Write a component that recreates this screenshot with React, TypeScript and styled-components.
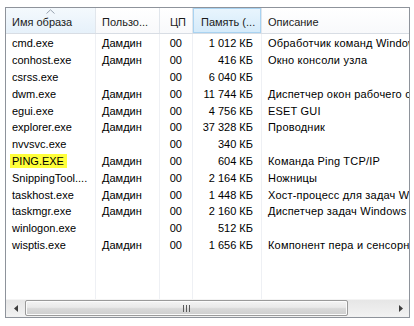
import React from "react";
import styled, { createGlobalStyle } from "styled-components";

const Global = createGlobalStyle`
  html, body { margin: 0; padding: 0; background: #fff; }
  body { font-family: "Liberation Sans", Arial, sans-serif; font-size: 11px; color: #000; }
`;

const COLS = "90px 64px 33px 69px 1fr";

const Page = styled.div`
  width: 414px;
  height: 326px;
  padding: 7px 4px 0 5px;
  box-sizing: border-box;
`;

const Panel = styled.div`
  width: 405px;
  height: 311px;
  box-sizing: border-box;
  border: 1px solid #8e939b;
  display: flex;
  flex-direction: column;
  overflow: hidden;
  background: #fff;
`;

const Header = styled.div`
  display: grid;
  grid-template-columns: ${COLS};
  height: 25px;
  border-bottom: 1px solid #d8dde4;
  background: linear-gradient(#ffffff, #f8f9fb);
  flex: none;
`;

const HeadCell = styled.div<{ $align?: "left" | "right"; $tone?: "sorted" | "hot" }>`
  position: relative;
  display: flex;
  align-items: center;
  justify-content: ${(p) => (p.$align === "right" ? "flex-end" : "flex-start")};
  padding: 3px 6px 0 6px;
  box-sizing: border-box;
  white-space: nowrap;
  overflow: hidden;
  color: #1a1a1a;
  border-right: 1px solid #e1e6ec;
  background: ${(p) =>
    p.$tone === "sorted"
      ? "linear-gradient(#f4f9fd, #e6f1fa)"
      : p.$tone === "hot"
      ? "linear-gradient(#e9f5fd, #d4eafa)"
      : "transparent"};
  ${(p) => (p.$tone === "hot" ? "box-shadow: inset 0 0 0 1px #a9d3f1;" : "")}
  &:last-child { border-right: none; }
`;

const SortArrow = styled.svg`
  position: absolute;
  left: 40px;
  top: 1px;
`;

const Body = styled.div`
  flex: 1;
  padding-top: 1px;
  background:
    linear-gradient(#eef0f4, #eef0f4) 89px 0 / 1px 100% no-repeat,
    linear-gradient(#eef0f4, #eef0f4) 153px 0 / 1px 100% no-repeat,
    linear-gradient(#eef0f4, #eef0f4) 186px 0 / 1px 100% no-repeat,
    linear-gradient(#eef0f4, #eef0f4) 255px 0 / 1px 100% no-repeat,
    #fff;
`;

const Row = styled.div`
  display: grid;
  grid-template-columns: ${COLS};
  height: 16.8px;
  align-items: center;
`;

const Cell = styled.div<{ $align?: "left" | "right"; $pr?: number }>`
  padding: 0 ${(p) => p.$pr ?? 6}px 0 6px;
  text-align: ${(p) => p.$align ?? "left"};
  white-space: nowrap;
  overflow: hidden;
  line-height: 14px;
`;

const WideCell = styled(Cell)`
  letter-spacing: 0.2px;
`;

const Marked = styled.span`
  background: #ffff3a;
  padding: 2px 3px 2px 2px;
  margin-left: -2px;
`;

const ScrollBar = styled.div`
  flex: none;
  height: 17px;
  display: grid;
  grid-template-columns: 19px 1fr 17px;
  background: linear-gradient(#e6e6e6, #f2f2f2);
  border-top: 1px solid #f4f4f4;
`;

const ArrowBtn = styled.div`
  display: flex;
  align-items: center;
  justify-content: center;
`;

const Track = styled.div`
  display: flex;
`;

const Thumb = styled.div`
  width: 323px;
  height: 16px;
  box-sizing: border-box;
  border: 1px solid #9a9a9a;
  border-radius: 2px;
  background: linear-gradient(#f4f4f4, #e9e9e9 45%, #d8d8d8 55%, #cfcfcf);
  box-shadow: inset 0 0 0 1px #fbfbfb;
  display: flex;
  align-items: center;
  justify-content: center;
`;

type Proc = { name: string; user: string; cpu: string; mem: string; desc: string; mark?: boolean };

const data: Proc[] = [
  { name: "cmd.exe", user: "Дамдин", cpu: "00", mem: "1 012 КБ", desc: "Обработчик команд Windows" },
  { name: "conhost.exe", user: "Дамдин", cpu: "00", mem: "416 КБ", desc: "Окно консоли узла" },
  { name: "csrss.exe", user: "", cpu: "00", mem: "6 040 КБ", desc: "" },
  { name: "dwm.exe", user: "Дамдин", cpu: "00", mem: "11 744 КБ", desc: "Диспетчер окон рабочего стола" },
  { name: "egui.exe", user: "Дамдин", cpu: "00", mem: "4 756 КБ", desc: "ESET GUI" },
  { name: "explorer.exe", user: "Дамдин", cpu: "00", mem: "37 328 КБ", desc: "Проводник" },
  { name: "nvvsvc.exe", user: "", cpu: "00", mem: "340 КБ", desc: "" },
  { name: "PING.EXE", user: "Дамдин", cpu: "00", mem: "604 КБ", desc: "Команда Ping TCP/IP", mark: true },
  { name: "SnippingTool....", user: "Дамдин", cpu: "00", mem: "2 164 КБ", desc: "Ножницы" },
  { name: "taskhost.exe", user: "Дамдин", cpu: "00", mem: "1 448 КБ", desc: "Хост-процесс для задач Windows" },
  { name: "taskmgr.exe", user: "Дамдин", cpu: "00", mem: "2 160 КБ", desc: "Диспетчер задач Windows" },
  { name: "winlogon.exe", user: "", cpu: "00", mem: "512 КБ", desc: "" },
  { name: "wisptis.exe", user: "Дамдин", cpu: "00", mem: "1 656 КБ", desc: "Компонент пера и сенсорного ввода" },
];

export default function App() {
  return (
    <Page>
      <Global />
      <Panel>
        <Header>
          <HeadCell $tone="sorted">
            <SortArrow width="9" height="5" viewBox="0 0 9 5">
              <path d="M0.5 4.5 L4.5 0.8 L8.5 4.5" fill="none" stroke="#97a3b0" strokeWidth="1" />
            </SortArrow>
            Имя образа
          </HeadCell>
          <HeadCell>Пользо...</HeadCell>
          <HeadCell $align="right">ЦП</HeadCell>
          <HeadCell $tone="hot" style={{ paddingLeft: 8 }}>Память (...</HeadCell>
          <HeadCell>Описание</HeadCell>
        </Header>
        <Body>
          {data.map((p) => (
            <Row key={p.name}>
              <Cell>{p.mark ? <Marked>{p.name}</Marked> : p.name}</Cell>
              <Cell>{p.user}</Cell>
              <Cell $align="right" $pr={11}>{p.cpu}</Cell>
              <Cell $align="right" $pr={9}>{p.mem}</Cell>
              <WideCell>{p.desc}</WideCell>
            </Row>
          ))}
        </Body>
        <ScrollBar>
          <ArrowBtn>
            <svg width="4" height="7" viewBox="0 0 4 7">
              <path d="M4 0 L0 3.5 L4 7 Z" fill="#3c3c3c" />
            </svg>
          </ArrowBtn>
          <Track>
            <Thumb>
              <svg width="7" height="7" viewBox="0 0 7 7">
                <path d="M0.5 0 V7 M3.5 0 V7 M6.5 0 V7" stroke="#5a5a5a" strokeWidth="1" />
              </svg>
            </Thumb>
          </Track>
          <ArrowBtn>
            <svg width="4" height="7" viewBox="0 0 4 7">
              <path d="M0 0 L4 3.5 L0 7 Z" fill="#3c3c3c" />
            </svg>
          </ArrowBtn>
        </ScrollBar>
      </Panel>
    </Page>
  );
}
